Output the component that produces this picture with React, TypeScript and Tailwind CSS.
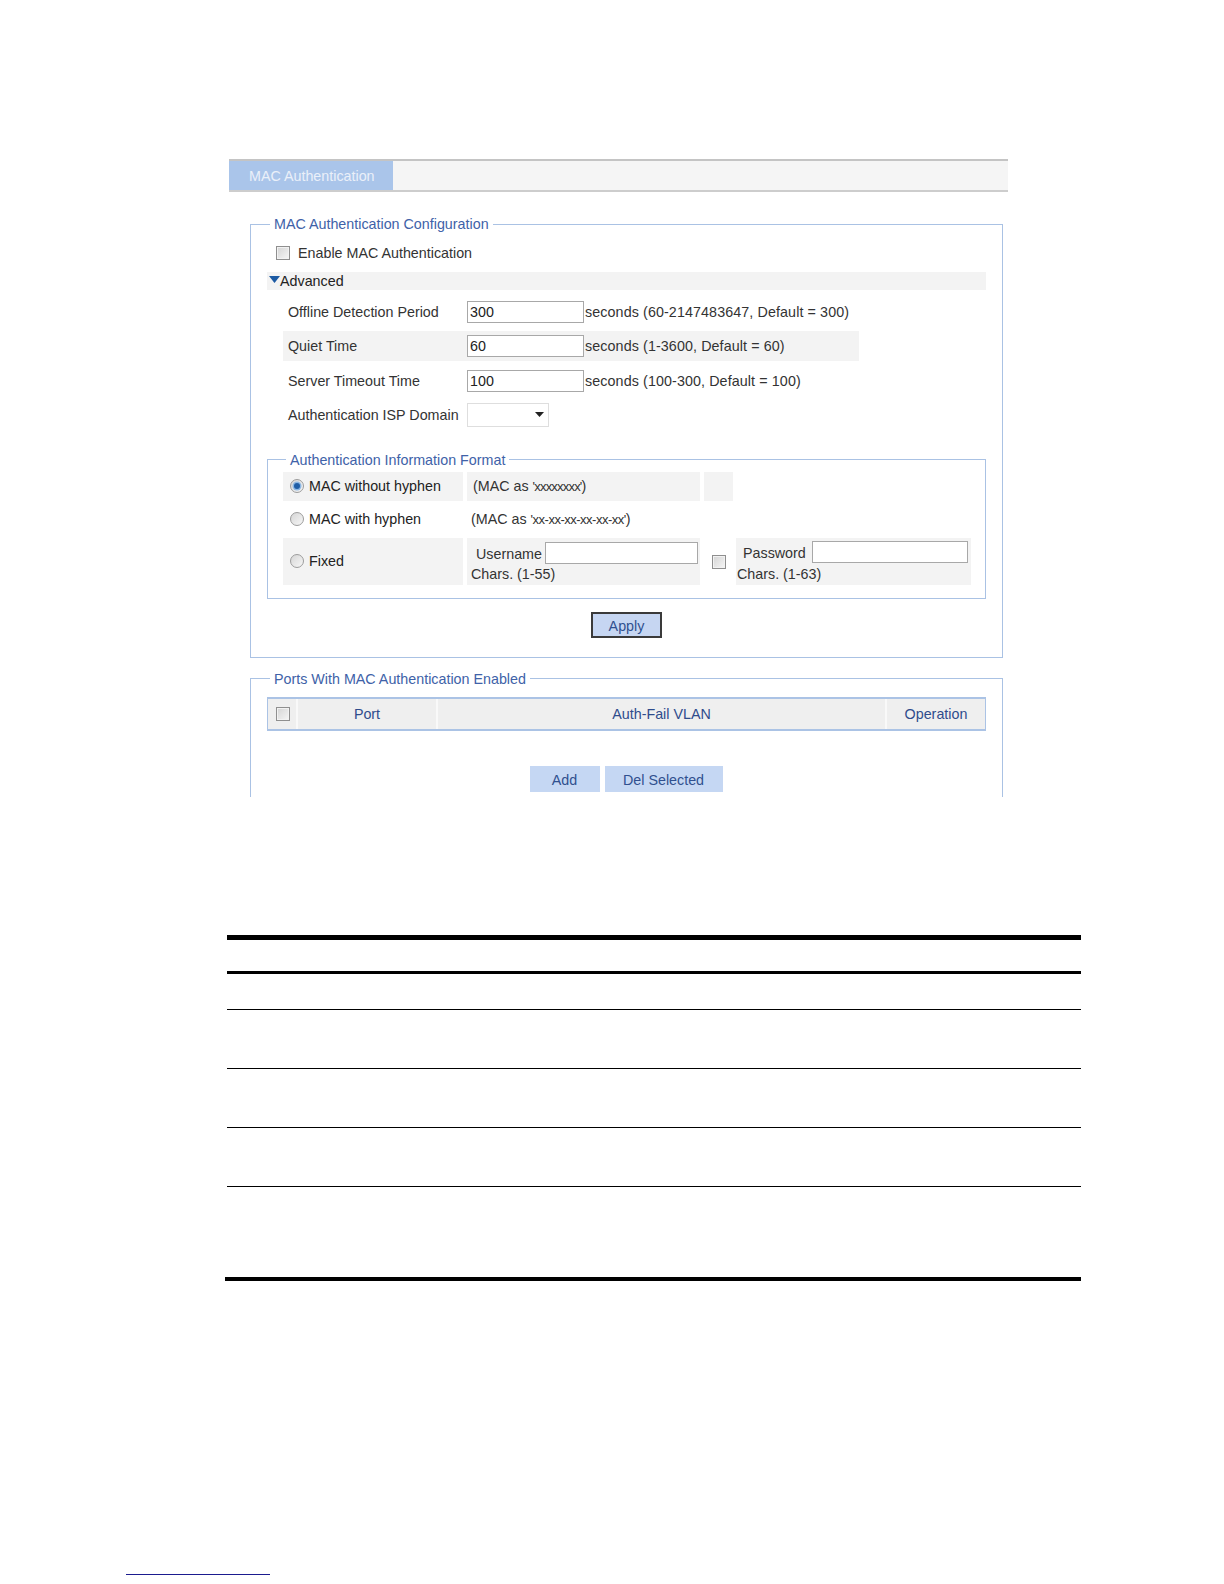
import React from "react";

const Checkbox = () => (
  <span className="inline-block w-[14px] h-[14px] shrink-0 border border-[#8f8f8f] bg-linear-to-br from-[#d4d4d4] to-[#f6f6f6] shadow-[inset_0_0_0_1px_#f2f2f2]" />
);

const Radio = ({ checked }: { checked?: boolean }) => (
  <span className="flex w-[14px] h-[14px] shrink-0 items-center justify-center rounded-full border border-[#9c9c9c] bg-linear-to-br from-[#d6d6d6] to-[#f7f7f7]">
    {checked && <span className="block w-[6px] h-[6px] rounded-full bg-[#1f5ea6] shadow-[0_0_0_1.5px_#8db8e4]" />}
  </span>
);

const TextInput = ({ value, w }: { value?: string; w: string }) => (
  <div className={`${w} h-[22px] shrink-0 border border-[#a8a8a8] bg-white px-[2px] leading-[20px] text-[#222]`}>
    {value}
  </div>
);

export default function App() {
  return (
    <div className="min-h-[1584px] bg-white font-['Liberation_Sans',Arial,sans-serif] text-[14.3px] leading-[16px] text-[#333]">
      {/* Tab bar */}
      <div className="pt-[159px] pl-[229px]">
        <div className="flex h-[33px] w-[779px] border-t-2 border-b-2 border-t-[#c4c4c4] border-b-[#cdcdcd] bg-[#f5f5f5]">
          <div className="flex w-[164px] items-center bg-[#aac5ea] pl-[20px] text-[#eaf0f9]">MAC Authentication</div>
        </div>
      </div>

      {/* Fieldset 1 */}
      <fieldset className="ml-[250px] mt-[24px] w-[753px] border border-[#aac2e4] p-0">
        <legend className="ml-[19px] px-[4px] leading-[16px] text-[#4062a8]">MAC Authentication Configuration</legend>
        <div className="px-[16px] pt-[8px] pb-[19px]">
          <div className="flex h-[25px] items-center gap-[8px] pl-[9px]">
            <Checkbox />
            <span>Enable MAC Authentication</span>
          </div>
          <div className="mt-[7px] flex h-[18px] items-center bg-[#f3f3f3] pl-[2px]">
            <svg width="11" height="7" viewBox="0 0 11 7" className="mb-[3px] shrink-0">
              <polygon points="0,0 11,0 5.5,7" fill="#1c5aa3" />
            </svg>
            <span className="text-[#222]">Advanced</span>
          </div>

          <div className="ml-[16px] mt-[7px] flex w-[576px] flex-col gap-[4.3px]">
            {[
              { l: "Offline Detection Period", v: "300", d: "seconds (60-2147483647, Default = 300)" },
              { l: "Quiet Time", v: "60", d: "seconds (1-3600, Default = 60)", bg: true },
              { l: "Server Timeout Time", v: "100", d: "seconds (100-300, Default = 100)" },
            ].map((r) => (
              <div key={r.l} className={`flex h-[30px] items-center ${r.bg ? "bg-[#f3f3f3]" : ""}`}>
                <div className="w-[184px] shrink-0 pl-[5px]">{r.l}</div>
                <TextInput value={r.v} w="w-[117px]" />
                <span className="pl-[1px] tracking-[0.1px]">{r.d}</span>
              </div>
            ))}
            <div className="flex h-[30px] items-center">
              <div className="w-[184px] shrink-0 pl-[5px]">Authentication ISP Domain</div>
              <div className="flex h-[24px] w-[82px] items-center justify-end border border-[#dedede] bg-white pr-[4px]">
                <svg width="9" height="5" viewBox="0 0 9 5">
                  <polygon points="0,0 9,0 4.5,5" fill="#222" />
                </svg>
              </div>
            </div>
          </div>

          {/* Inner fieldset */}
          <fieldset className="mt-[22px] w-full border border-[#aac2e4] p-0">
            <legend className="ml-[18px] px-[4px] leading-[16px] text-[#4062a8]">Authentication Information Format</legend>
            <div className="flex flex-col gap-[3px] pl-[15px] pt-[4px] pb-[13px]">
              <div className="flex h-[29px] gap-[4px]">
                <div className="flex w-[180px] items-center gap-[5px] bg-[#f3f3f3] pl-[7px]">
                  <Radio checked />
                  <span className="text-[#222]">MAC without hyphen</span>
                </div>
                <div className="flex w-[233px] items-center bg-[#f3f3f3] pl-[6px]">
                  <span>
                    (MAC as <span className="text-[13px] tracking-[-0.8px]">'xxxxxxxx'</span>)
                  </span>
                </div>
                <div className="w-[29px] bg-[#f3f3f3]" />
              </div>
              <div className="flex h-[31px] gap-[4px]">
                <div className="flex w-[180px] items-center gap-[5px] pl-[7px]">
                  <Radio />
                  <span className="text-[#222]">MAC with hyphen</span>
                </div>
                <div className="flex w-[233px] items-center pl-[4px]">
                  <span>
                    (MAC as <span className="text-[13px] tracking-[-0.5px]">'xx-xx-xx-xx-xx-xx'</span>)
                  </span>
                </div>
              </div>
              <div className="flex h-[47px] gap-[4px]">
                <div className="flex w-[180px] items-center gap-[5px] bg-[#f3f3f3] pl-[7px]">
                  <Radio />
                  <span className="text-[#222]">Fixed</span>
                </div>
                <div className="flex w-[233px] flex-col bg-[#f3f3f3] pt-[4px]">
                  <div className="flex items-center">
                    <span className="pl-[9px] pt-[2px]">Username</span>
                    <TextInput w="w-[153px] ml-[3px]" />
                  </div>
                  <div className="pl-[4px] pt-[2px]">Chars. (1-55)</div>
                </div>
                <div className="flex w-[29px] items-center justify-center pt-[1px]">
                  <Checkbox />
                </div>
                <div className="-ml-[1px] flex w-[235px] flex-col bg-[#f3f3f3] pt-[3px]">
                  <div className="flex items-center">
                    <span className="pl-[7px] pt-[3px]">Password</span>
                    <TextInput w="w-[156px] ml-[6px]" />
                  </div>
                  <div className="pl-[1px] pt-[3px]">Chars. (1-63)</div>
                </div>
              </div>
            </div>
          </fieldset>

          <div className="mt-[13px] flex justify-center">
            <div className="flex h-[26px] w-[71px] items-center justify-center border-2 border-[#3a3a3a] bg-[#c6d6f2] pt-[2px] text-[#30508f]">
              Apply
            </div>
          </div>
        </div>
      </fieldset>

      {/* Fieldset 2 (clipped) */}
      <div className="mt-[13px] h-[126px] overflow-hidden">
        <fieldset className="ml-[250px] w-[753px] border border-[#aac2e4] p-0">
          <legend className="ml-[19px] px-[4px] leading-[16px] text-[#4062a8]">Ports With MAC Authentication Enabled</legend>
          <div className="px-[16px] pt-[10px] pb-[60px]">
            <div className="flex h-[34px] w-[719px] border border-y-2 border-[#abc3e5] bg-[#efefef] text-[#2f4c8c]">
              <div className="flex w-[30px] items-center justify-center border-r-2 border-[#f9f9f9] pl-[1px]">
                <Checkbox />
              </div>
              <div className="flex w-[140px] items-center justify-center border-r-2 border-[#f9f9f9]">Port</div>
              <div className="flex w-[449px] items-center justify-center border-r-2 border-[#f9f9f9]">Auth-Fail VLAN</div>
              <div className="flex flex-1 items-center justify-center">Operation</div>
            </div>
            <div className="mt-[35px] flex justify-center gap-[5px] pr-[1px]">
              <div className="flex h-[26px] w-[70px] items-center justify-center bg-[#c5d7f3] pt-[3px] text-[#30508f]">Add</div>
              <div className="flex h-[26px] w-[118px] items-center justify-center bg-[#c5d7f3] pt-[3px] text-[#30508f]">Del Selected</div>
            </div>
          </div>
        </fieldset>
      </div>

      {/* Document table lines */}
      <div className="ml-[227px] mt-[138px] flex w-[854px] flex-col">
        <div className="h-[5px] bg-black" />
        <div className="h-[31px]" />
        <div className="h-[3px] bg-black" />
        <div className="h-[35px]" />
        <div className="h-[1px] bg-black" />
        <div className="h-[58px]" />
        <div className="h-[1px] bg-black" />
        <div className="h-[58px]" />
        <div className="h-[1px] bg-black" />
        <div className="h-[58px]" />
        <div className="h-[1px] bg-black" />
        <div className="h-[90px]" />
        <div className="-ml-[2px] h-[4px] w-[856px] bg-black" />
      </div>

      {/* Footnote rule */}
      <div className="ml-[126px] mt-[293px] h-[1px] w-[144px] bg-[#1b1b8f]" />
    </div>
  );
}
